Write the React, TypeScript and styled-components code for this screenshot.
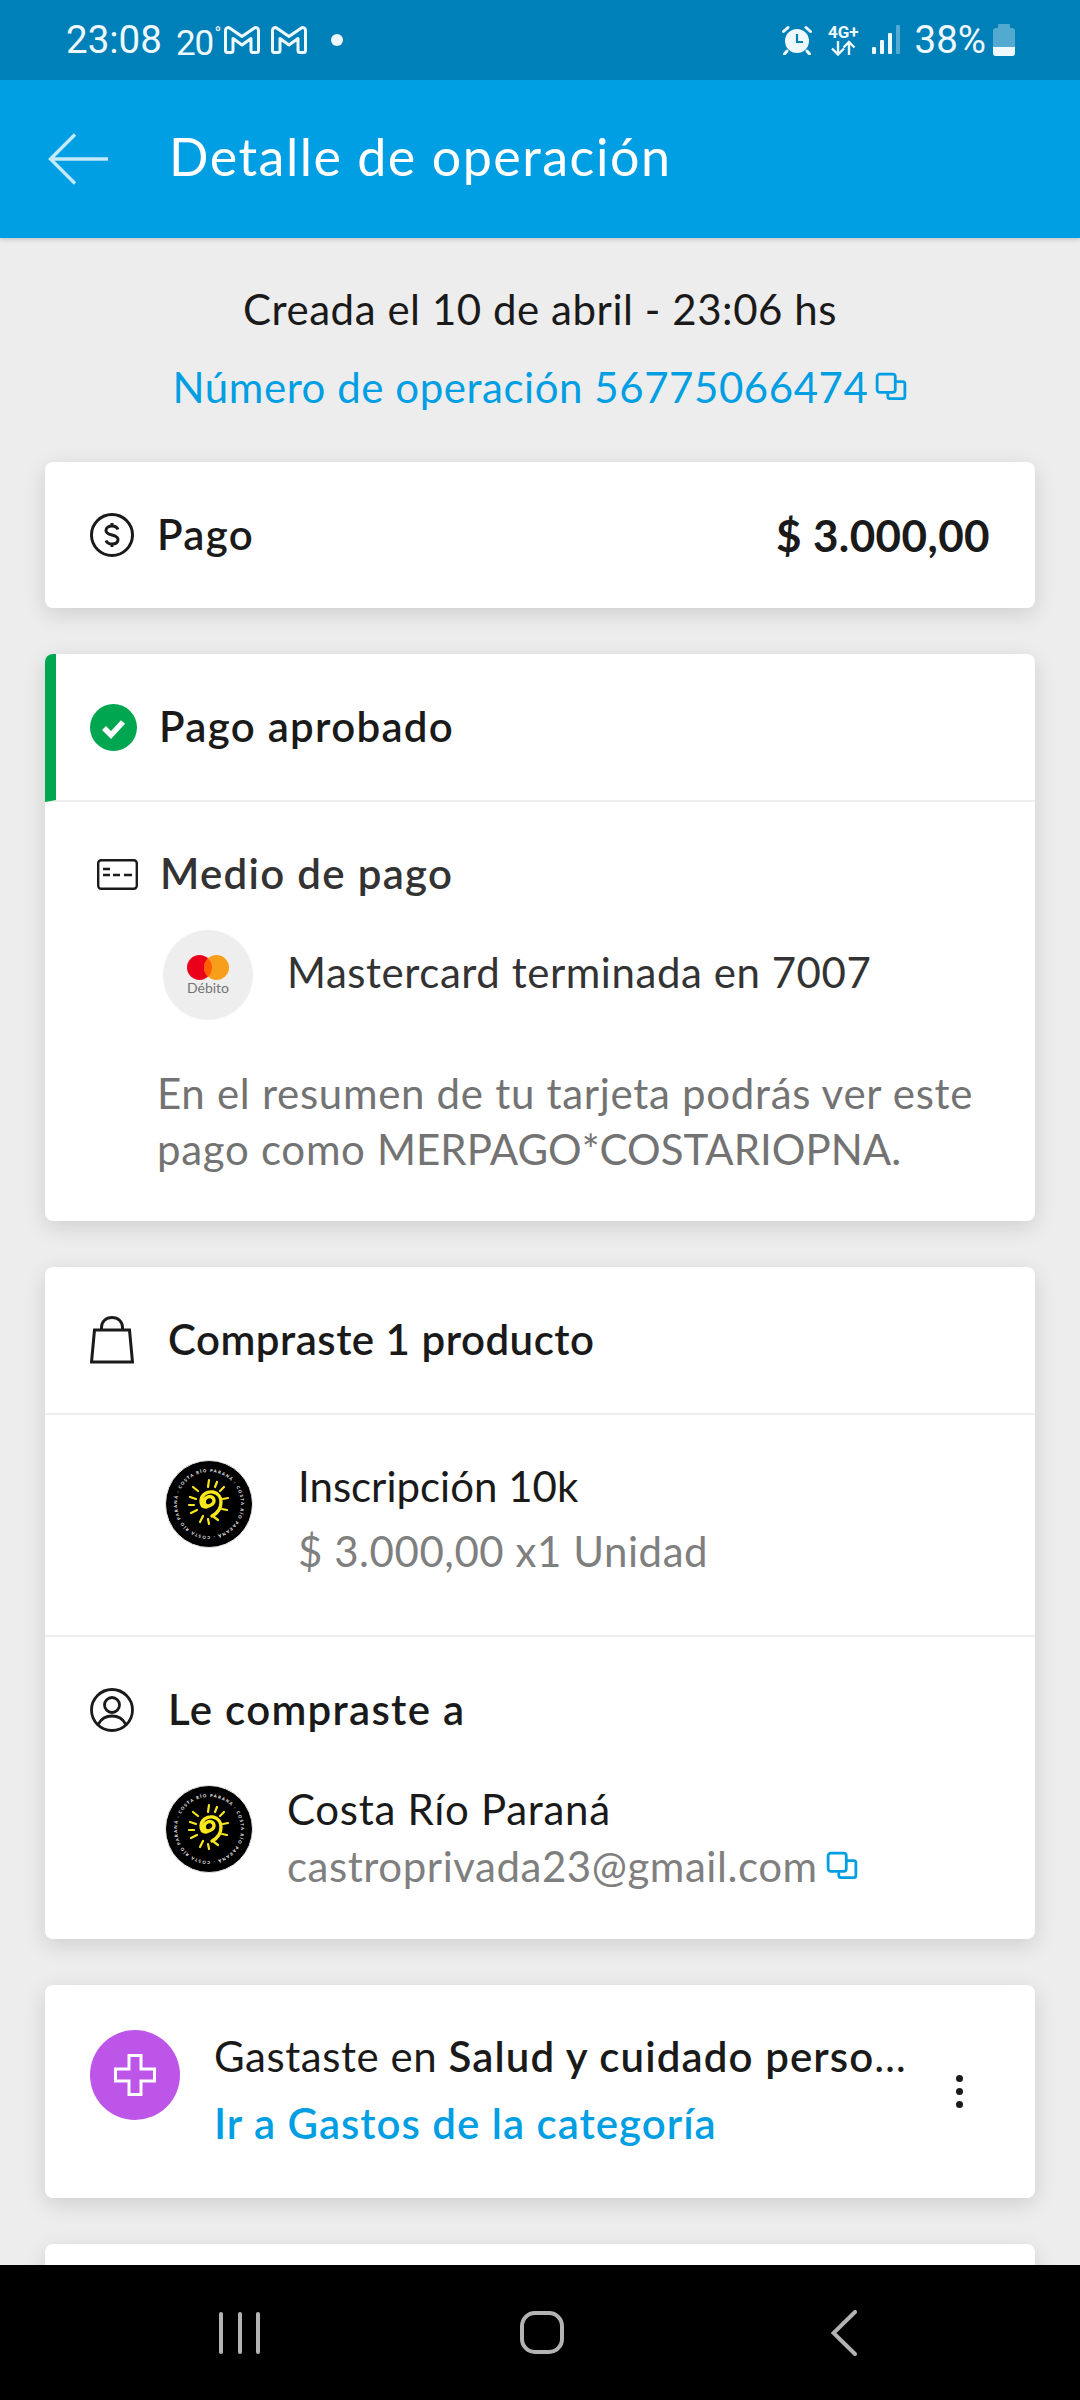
import React from "react";
import styled, { createGlobalStyle } from "styled-components";

const GlobalStyle = createGlobalStyle`
  html, body {
    margin: 0;
    padding: 0;
    background: #ededed;
  }
  * {
    box-sizing: border-box;
  }
`;

const Page = styled.div`
  width: 1080px;
  height: 2400px;
  display: flex;
  flex-direction: column;
  overflow: hidden;
  background: #ededed;
  font-family: "Lato", "Open Sans", sans-serif;
  letter-spacing: 0.55px;
  color: #1a1a1a;
`;

const StatusBar = styled.div`
  height: 80px;
  flex-shrink: 0;
  padding: 0 65px 0 66px;
  display: flex;
  align-items: center;
  justify-content: space-between;
  background: #0080b9;
  color: #eef9fe;
  font-family: "Roboto", sans-serif;
  letter-spacing: 0;
`;

const StatusGroup = styled.div`
  display: flex;
  align-items: center;
`;

const Clock = styled.span`
  font-size: 38.5px;
  line-height: 40px;
  margin-right: 14px;
`;

const Temp = styled.span`
  font-size: 35px;
  line-height: 40px;
  margin: 8px 11px 0 0;
  letter-spacing: -1px;
  position: relative;
`;

const Deg = styled.span`
  position: absolute;
  top: -10px;
  right: -7px;
  font-size: 18px;
`;

const MailIcons = styled.div`
  display: flex;
  gap: 11px;
`;

const Dot = styled.span`
  width: 12px;
  height: 12px;
  margin-left: 24px;
  border-radius: 50%;
  background: #eef9fe;
`;

const Percent = styled.span`
  font-size: 38.5px;
  line-height: 40px;
  margin: 0 7px 0 15px;
`;

const NetIcon = styled.div`
  display: flex;
  flex-direction: column;
  align-items: center;
  margin: 0 13px 0 16px;
  font-size: 17px;
  line-height: 16px;
  font-weight: 700;
`;

const Header = styled.header`
  height: 158px;
  flex-shrink: 0;
  padding-left: 48px;
  display: flex;
  align-items: center;
  gap: 61px;
  background: #009ee3;
  color: #fff;
  box-shadow: 0 2px 4px rgba(0, 0, 0, 0.15);
  position: relative;
  z-index: 1;
`;

const HeaderTitle = styled.h1`
  margin: -6px 0 0;
  font-size: 52px;
  font-weight: 400;
  letter-spacing: 1.5px;
`;

const Content = styled.main`
  flex: 1;
  min-height: 0;
  overflow: hidden;
  padding: 0 45px;
  display: flex;
  flex-direction: column;
  gap: 46px;
`;

const Intro = styled.div`
  height: 178px;
  flex-shrink: 0;
  padding-top: 48px;
  text-align: center;
  font-size: 42px;
  line-height: 46px;
`;

const OperationLink = styled.div`
  margin-top: 32px;
  color: #009ee3;
  display: flex;
  justify-content: center;
  align-items: center;
  gap: 7px;
`;

const Card = styled.section`
  flex-shrink: 0;
  background: #fff;
  border-radius: 8px;
  box-shadow: 0 6px 22px rgba(0, 0, 0, 0.13);
  overflow: hidden;
`;

const Row = styled.div<{ $height: number; $pad?: number; $between?: boolean; $divider?: boolean; $top?: number }>`
  height: ${(p) => p.$height}px;
  margin-top: ${(p) => p.$top ?? 0}px;
  padding: 0 45px;
  padding-left: ${(p) => p.$pad ?? 45}px;
  display: flex;
  align-items: center;
  justify-content: ${(p) => (p.$between ? "space-between" : "flex-start")};
  border-bottom: ${(p) => (p.$divider ? "2px solid #eeeeee" : "none")};
`;

const StatusRow = styled(Row)`
  border-left: 11px solid #00a650;
  padding-left: 34px;
`;

const Inline = styled.div`
  display: flex;
  align-items: center;
`;

const IconSlot = styled.div<{ $width: number }>`
  width: ${(p) => p.$width}px;
  flex-shrink: 0;
  display: flex;
  align-items: center;
`;

const Strong = styled.span<{ $muted?: boolean; $track?: number }>`
  padding-bottom: 3px;
  font-size: 42px;
  font-weight: 600;
  letter-spacing: ${(p) => p.$track ?? 1.3}px;
  color: ${(p) => (p.$muted ? "#333333" : "#1a1a1a")};
`;

const Amount = styled.span`
  font-size: 44px;
  font-weight: 700;
  letter-spacing: 0.4px;
`;

const BrandCircle = styled.div`
  width: 90px;
  height: 90px;
  margin-right: 34px;
  border-radius: 50%;
  background: #eeeeee;
  display: flex;
  flex-direction: column;
  align-items: center;
  justify-content: center;
  flex-shrink: 0;
`;

const BrandLabel = styled.span`
  font-size: 14px;
  line-height: 16px;
  letter-spacing: 0;
  color: #737373;
`;

const Body = styled.span`
  font-size: 42px;
  line-height: 46px;
  padding-bottom: 6px;
  color: #333333;
`;

const Description = styled.p`
  margin: 0;
  padding: 45px 40px 44px 112px;
  font-size: 42px;
  line-height: 56px;
  letter-spacing: 0.7px;
  color: #737373;
`;

const Caps = styled.span`
  letter-spacing: 0;
`;

const DetailBlock = styled.div`
  display: flex;
  flex-direction: column;
`;

const ItemRow = styled.div<{ $height: number; $align: number; $divider?: boolean; $gap: number }>`
  height: ${(p) => p.$height}px;
  padding: ${(p) => p.$align}px 40px 0 120px;
  display: flex;
  align-items: flex-start;
  gap: ${(p) => p.$gap}px;
  border-bottom: ${(p) => (p.$divider ? "2px solid #eeeeee" : "none")};
`;

const ItemName = styled.span<{ $top?: number; $track?: number }>`
  margin-top: ${(p) => p.$top ?? 0}px;
  font-size: 42px;
  line-height: 48px;
  letter-spacing: ${(p) => p.$track ?? 0.7}px;
  color: #1a1a1a;
`;

const ItemSub = styled.span<{ $top: number }>`
  margin-top: ${(p) => p.$top}px;
  font-size: 42px;
  line-height: 50px;
  color: #7f7f7f;
  display: flex;
  align-items: center;
  gap: 8px;
`;

const CategoryRow = styled.div`
  height: 213px;
  padding: 45px 45px 0;
  display: flex;
  align-items: flex-start;
  gap: 34px;
`;

const CategoryCircle = styled.div`
  width: 90px;
  height: 90px;
  border-radius: 50%;
  background: #bd55e8;
  display: flex;
  align-items: center;
  justify-content: center;
  flex-shrink: 0;
`;

const CategoryText = styled.div`
  width: 702px;
  flex-shrink: 0;
  font-size: 42px;
  line-height: 46px;
  padding-top: 3px;
`;

const Ellipsis = styled.div`
  white-space: nowrap;
  overflow: hidden;
  text-overflow: ellipsis;
`;

const CategoryLink = styled.div`
  margin-top: 21px;
  color: #009ee3;
  font-weight: 600;
  letter-spacing: 1px;
`;

const MoreDots = styled.div`
  display: flex;
  flex-direction: column;
  gap: 6px;
  margin: 45px 0 0 6px;
`;

const MoreDot = styled.span`
  width: 7px;
  height: 7px;
  border-radius: 50%;
  background: #1a1a1a;
`;

const NavBar = styled.nav`
  height: 135px;
  flex-shrink: 0;
  padding-left: 219px;
  display: flex;
  align-items: center;
  background: #000;
  position: relative;
  z-index: 1;
`;

const NavRecents = styled.div`
  width: 41px;
  height: 42px;
  display: flex;
  justify-content: space-between;
`;

const NavBarLine = styled.span`
  width: 4px;
  background: #b3b3b3;
  border-radius: 2px;
`;

const NavHome = styled.div`
  width: 44px;
  height: 43px;
  margin: 0 267px 0 260px;
  border: 4px solid #b3b3b3;
  border-radius: 15px;
`;

const CopyIcon = () => (
  <svg width="32" height="32" viewBox="0 0 30 30" fill="none" stroke="#009ee3" strokeWidth="2.6">
    <rect x="2" y="3" width="17" height="17" rx="2.5" />
    <path d="M19 10h7a2 2 0 0 1 2 2v12a2 2 0 0 1-2 2H14a2 2 0 0 1-2-2v-4" />
  </svg>
);

const GmailIcon = () => (
  <svg width="36" height="28" viewBox="0 0 36 28" fill="none" stroke="#eef9fe" strokeWidth="3" strokeLinejoin="round">
    <path d="M1.500 4.500C1.500 2 4 .8 6 2.200L18 10.500 30 2.200C32 .8 34.500 2 34.500 4.500V24.500C34.500 25.800 33.600 26.500 32.500 26.500H29C27.800 26.500 27 25.800 27 24.500V12.500L18 19 9 12.500V24.500C9 25.800 8.200 26.500 7 26.500H3.500C2.400 26.500 1.500 25.800 1.500 24.500Z" />
  </svg>
);

const SunLogo = () => (
  <svg width="88" height="88" viewBox="0 0 88 88">
    <defs>
      <path id="logo-ring" d="M44 44m-32 0a32 32 0 1 1 64 0a32 32 0 1 1-64 0" />
    </defs>
    <circle cx="44" cy="44" r="43.500" fill="#000" stroke="#e8e8e8" strokeWidth="1" />
    <text fontFamily="Lato, sans-serif" fontSize="4.200" fontWeight="700" fill="#fff" transform="rotate(28 44 44)">
      <textPath href="#logo-ring" textLength="198" lengthAdjust="spacing">
        COSTA RÍO PARANÁ · COSTA RÍO PARANÁ · COSTA RÍO PARANÁ ·
      </textPath>
    </text>
    <g fill="none" stroke="#f7e71c" strokeLinecap="round">
      <path d="M43 46c-4 0-5-6-2-8 4-3 8-1 8 3 0 4-5 5-8 6-3 0-5-2-5-6 0-6 6-10 12-9 5 1 8 5 8 10 0 6-3 11-9 14" strokeWidth="3.400" />
      <path d="M44 20l-1 7M52 22l-2 5M59 27l-4 4M28 27l5 4M25 37l6 2M63 38l-5 1M26 53l6-3M62 50l-5-1M35 62l3-6M44 64l-1-5M53 60l-4-3M24 45l5 0" strokeWidth="2.200" />
    </g>
  </svg>
);

const App = () => {
  return (
    <Page>
      <GlobalStyle />
      <StatusBar>
        <StatusGroup>
          <Clock>23:08</Clock>
          <Temp>
            20<Deg>°</Deg>
          </Temp>
          <MailIcons>
            <GmailIcon />
            <GmailIcon />
          </MailIcons>
          <Dot />
        </StatusGroup>
        <StatusGroup>
          <svg width="30" height="30" viewBox="0 0 30 30">
            <circle cx="15" cy="16" r="12" fill="#eef9fe" />
            <path d="M15 9v8h6" fill="none" stroke="#0080b9" strokeWidth="2.200" />
            <path d="M1.500 6.500L6 2.500M28.500 6.500L24 2.500M5 26l-2.500 3M25 26l2.500 3" stroke="#eef9fe" strokeWidth="3" strokeLinecap="round" />
          </svg>
          <NetIcon>
            <span>4G+</span>
            <svg width="28" height="16" viewBox="0 0 28 16" fill="none" stroke="#eef9fe" strokeWidth="2.400">
              <path d="M9 1v13M3 8.500L9 14.500 15 8.500M20 15V2M14.500 7.500L20 2l5.500 5.500" />
            </svg>
          </NetIcon>
          <svg width="28" height="30" viewBox="0 0 28 30">
            <rect x="0" y="22" width="4" height="7" rx="1" fill="#eef9fe" />
            <rect x="8" y="15" width="4" height="14" rx="1" fill="#eef9fe" />
            <rect x="16" y="8" width="4" height="21" rx="1" fill="#eef9fe" />
            <rect x="24" y="0" width="4" height="29" rx="1" fill="#eef9fe" opacity="0.35" />
          </svg>
          <Percent>38%</Percent>
          <svg width="22" height="32" viewBox="0 0 22 32">
            <path d="M6 0h10a1 1 0 0 1 1 1v3h2a3 3 0 0 1 3 3v22a3 3 0 0 1-3 3H3a3 3 0 0 1-3-3V7a3 3 0 0 1 3-3h2V1a1 1 0 0 1 1-1z" fill="#eef9fe" opacity="0.35" />
            <path d="M0 23h22v6a3 3 0 0 1-3 3H3a3 3 0 0 1-3-3z" fill="#eef9fe" />
          </svg>
        </StatusGroup>
      </StatusBar>

      <Header>
        <svg width="60" height="52" viewBox="0 0 60 52" fill="none" stroke="#c4e9fa" strokeWidth="3.400">
          <path d="M27 1.500L2.500 26 27 50.500M2.500 26H60" />
        </svg>
        <HeaderTitle>Detalle de operación</HeaderTitle>
      </Header>

      <Content>
        <Intro>
          <div>Creada el 10 de abril - 23:06 hs</div>
          <OperationLink>
            Número de operación 56775066474
            <CopyIcon />
          </OperationLink>
        </Intro>

        <Card>
          <Row $height={146} $between>
            <Inline>
              <IconSlot $width={67}>
                <svg width="44" height="44" viewBox="0 0 44 44" fill="none" stroke="#1a1a1a" strokeWidth="3">
                  <circle cx="22" cy="22" r="20.500" />
                  <path d="M28 16.500c-1-2.500-3.200-3.500-6-3.500-3.400 0-6 1.600-6 4.500 0 6 12 3 12 9 0 3-2.600 4.500-6 4.500-2.800 0-5-1-6-3.500M22 10v3M22 31v3" />
                </svg>
              </IconSlot>
              <Strong>Pago</Strong>
            </Inline>
            <Amount>$ 3.000,00</Amount>
          </Row>
        </Card>

        <Card>
          <StatusRow $height={148} $divider>
            <IconSlot $width={69}>
              <svg width="47" height="47" viewBox="0 0 47 47">
                <circle cx="23.500" cy="23.500" r="23.500" fill="#00a650" />
                <path d="M14 24l7 7 12-13" fill="none" stroke="#fff" strokeWidth="5.500" />
              </svg>
            </IconSlot>
            <Strong>Pago aprobado</Strong>
          </StatusRow>
          <DetailBlock>
            <Row $height={100} $pad={52} $top={22}>
              <IconSlot $width={63}>
                <svg width="41" height="31" viewBox="0 0 41 31" fill="none" stroke="#1a1a1a" strokeWidth="2.400">
                  <rect x="1.200" y="1.200" width="38.600" height="28.600" rx="3" />
                  <path d="M6 10h7M6 16h7M16 16h7M27 16h8" />
                </svg>
              </IconSlot>
              <Strong $muted>Medio de pago</Strong>
            </Row>
            <Row $height={90} $pad={118} $top={6}>
              <BrandCircle>
                <svg width="42" height="25" viewBox="0 0 42 25">
                  <circle cx="12.500" cy="12.500" r="12.500" fill="#eb001b" />
                  <circle cx="29.500" cy="12.500" r="12.500" fill="#f79e1b" />
                  <path d="M21 3.300a12.500 12.500 0 0 1 0 18.400 12.500 12.500 0 0 1 0-18.400z" fill="#ff5f00" />
                </svg>
                <BrandLabel>Débito</BrandLabel>
              </BrandCircle>
              <Body>Mastercard terminada en 7007</Body>
            </Row>
            <Description>
              En el resumen de tu tarjeta podrás ver este pago como <Caps>MERPAGO*COSTARIOPNA.</Caps>
            </Description>
          </DetailBlock>
        </Card>

        <Card>
          <Row $height={148} $divider>
            <IconSlot $width={78}>
              <svg width="44" height="48" viewBox="0 0 44 48" fill="none" stroke="#1a1a1a" strokeWidth="3">
                <path d="M4.500 14h35l3 32h-41z" />
                <path d="M11.500 14V11.500C11.500 5.500 16 1.500 22 1.500s10.500 4 10.500 10V14" />
              </svg>
            </IconSlot>
            <Strong $track={0.5}>Compraste 1 producto</Strong>
          </Row>
          <ItemRow $height={222} $align={45} $gap={45} $divider>
            <SunLogo />
            <DetailBlock>
              <ItemName $top={2} $track={0}>Inscripción 10k</ItemName>
              <ItemSub $top={16}>$ 3.000,00 x1 Unidad</ItemSub>
            </DetailBlock>
          </ItemRow>
          <Row $height={146}>
            <IconSlot $width={78}>
              <svg width="44" height="44" viewBox="0 0 44 44" fill="none" stroke="#1a1a1a" strokeWidth="2.800">
                <circle cx="22" cy="22" r="20.500" />
                <circle cx="22" cy="17" r="7.500" />
                <path d="M8.500 36c3-6 8-8 13.500-8s10.500 2 13.500 8" />
              </svg>
            </IconSlot>
            <Strong>Le compraste a</Strong>
          </Row>
          <ItemRow $height={156} $align={2} $gap={34}>
            <SunLogo />
            <DetailBlock>
              <ItemName>Costa Río Paraná</ItemName>
              <ItemSub $top={8}>
                castroprivada23@gmail.com
                <CopyIcon />
              </ItemSub>
            </DetailBlock>
          </ItemRow>
        </Card>

        <Card>
          <CategoryRow>
            <CategoryCircle>
              <svg width="42" height="42" viewBox="0 0 42 42" fill="none" stroke="#fff" strokeWidth="3">
                <path d="M15 1.500h12V15h13.500v12H27v13.500H15V27H1.500V15H15z" />
              </svg>
            </CategoryCircle>
            <CategoryText>
              <Ellipsis>
                Gastaste en <Strong $track={1.1}>Salud y cuidado personal</Strong>
              </Ellipsis>
              <CategoryLink>Ir a Gastos de la categoría</CategoryLink>
            </CategoryText>
            <MoreDots>
              <MoreDot />
              <MoreDot />
              <MoreDot />
            </MoreDots>
          </CategoryRow>
        </Card>

        <Card>
          <Row $height={120} />
        </Card>
      </Content>

      <NavBar>
        <NavRecents>
          <NavBarLine />
          <NavBarLine />
          <NavBarLine />
        </NavRecents>
        <NavHome />
        <svg width="26" height="46" viewBox="0 0 26 46" fill="none" stroke="#b3b3b3" strokeWidth="4" strokeLinecap="round">
          <path d="M24 2L2.500 23 24 44" />
        </svg>
      </NavBar>
    </Page>
  );
};

export default App;
